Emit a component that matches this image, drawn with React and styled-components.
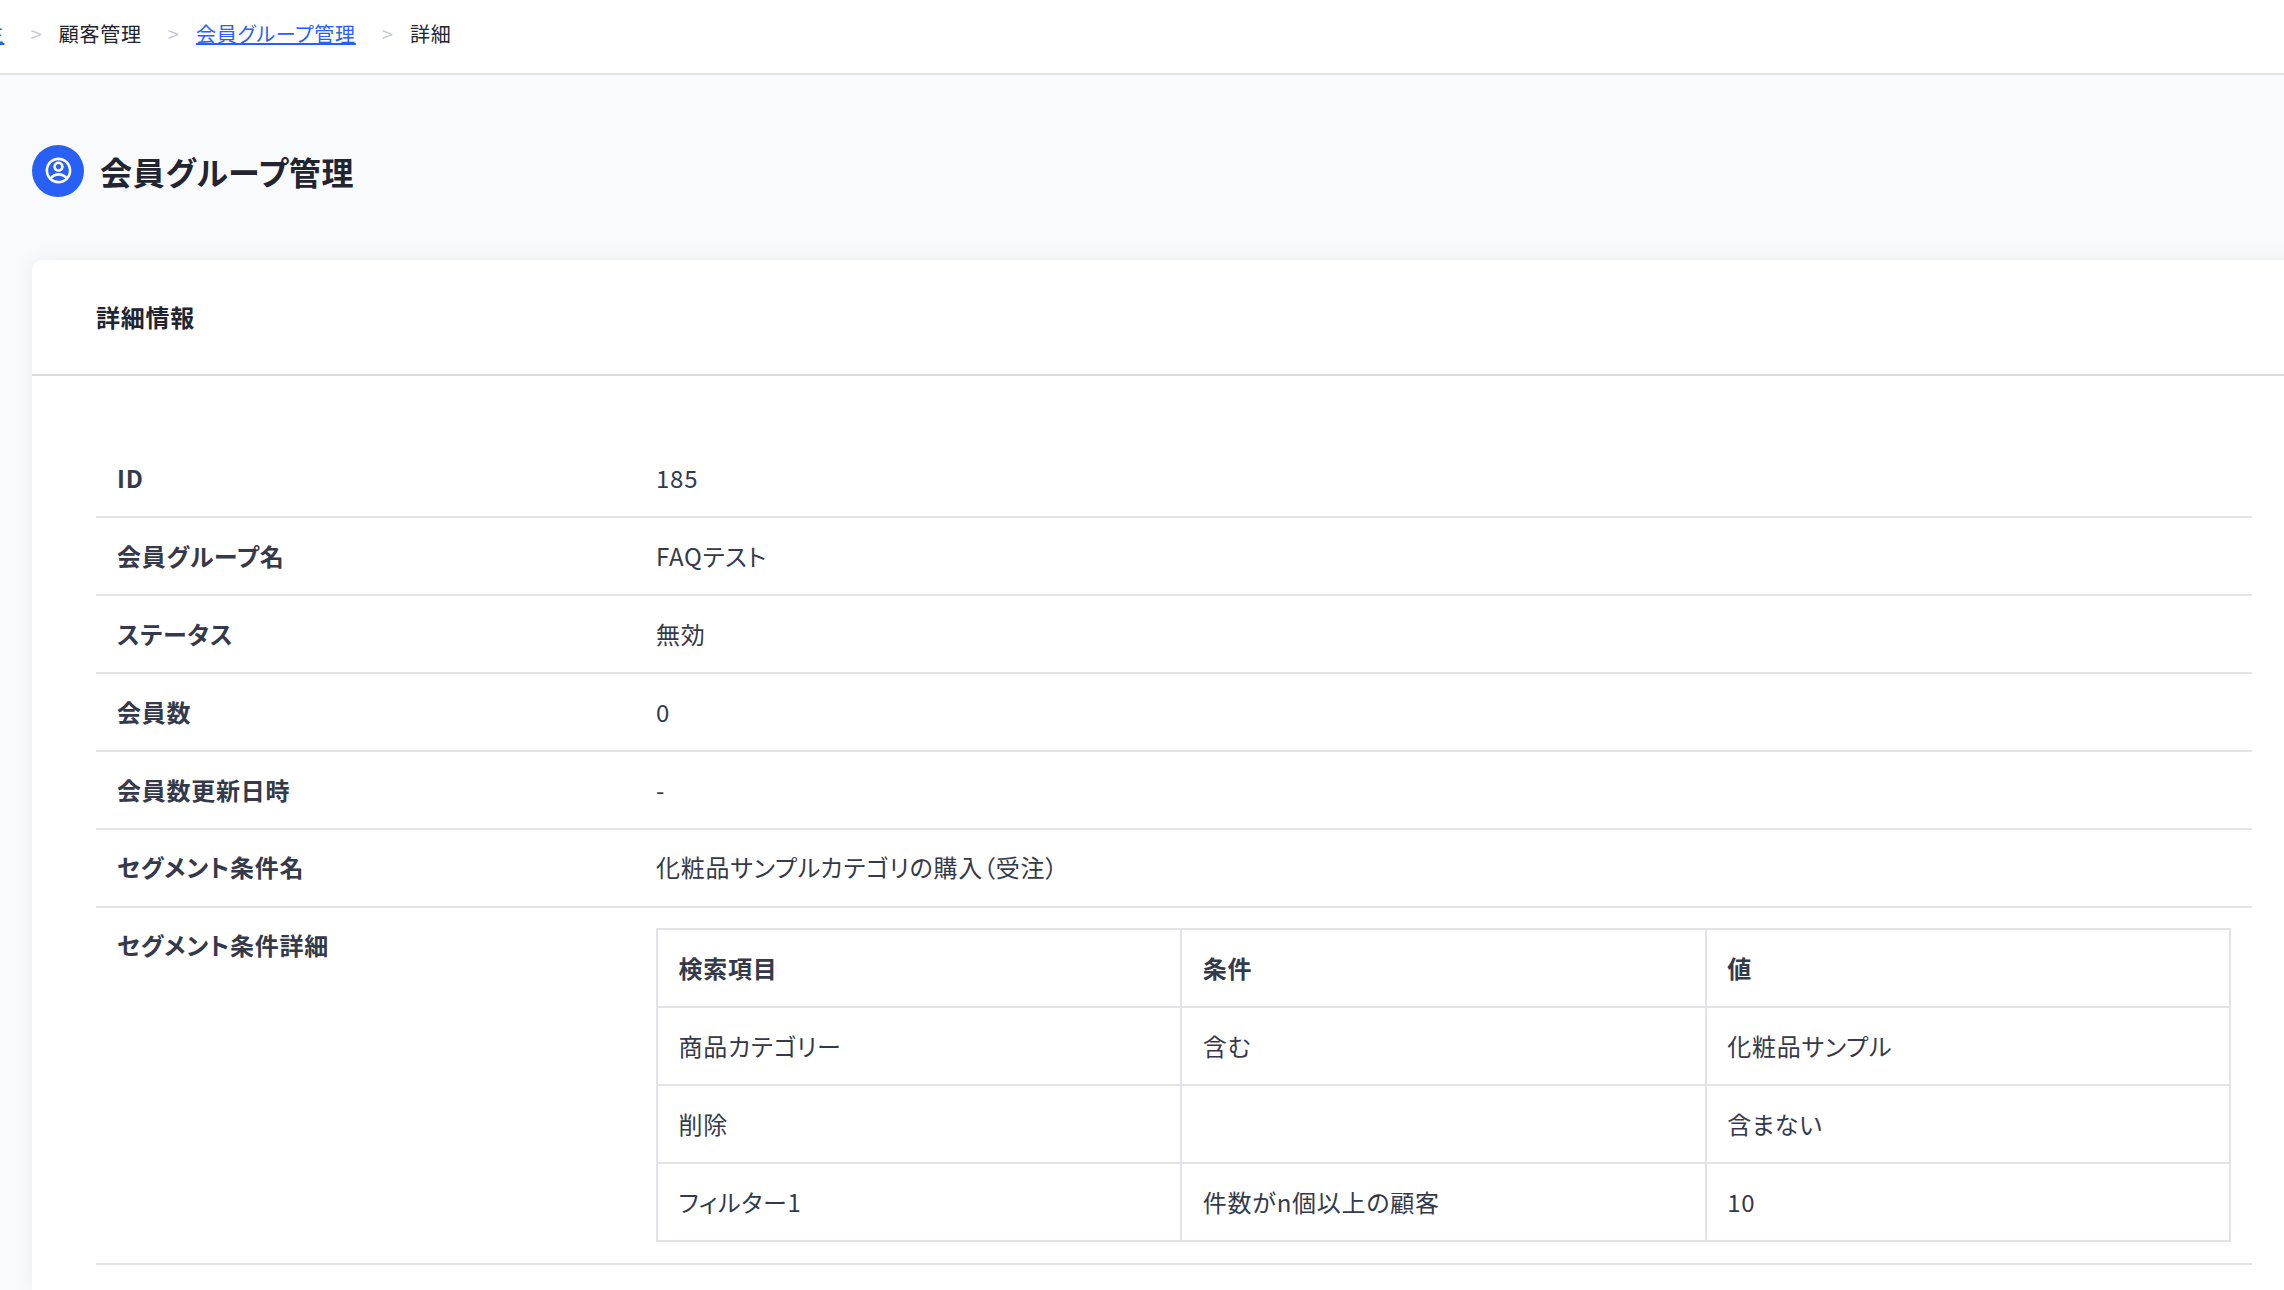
import { RiAccountCircleLine } from "react-icons/ri";
import styled, { createGlobalStyle } from "styled-components";

const GlobalStyle = createGlobalStyle`
  * {
    box-sizing: border-box;
  }

  html,
  body {
    margin: 0;
    height: 100%;
    overflow: hidden;
  }

  body {
    background: #f8fafc;
    color: #353a4a;
    font-family: "Noto Sans CJK JP", "Noto Sans", sans-serif;
    font-size: 24px;
    line-height: 36px;
    letter-spacing: 0.032em;
    font-feature-settings: "palt";
  }
`;

const Breadcrumb = styled.nav`
  height: 75px;
  padding-bottom: 5px;
  display: flex;
  align-items: center;
  background: #ffffff;
  border-bottom: 2px solid #e2e2ea;
  color: #222530;
  font-size: 20px;
  white-space: nowrap;
`;

const BreadcrumbItem = styled.span`
  margin-left: ${(props) => (props.$first ? "-80px" : "0")};
  width: ${(props) => (props.$first ? "84.5px" : "auto")};
  text-align: right;
`;

const BreadcrumbLink = styled.a`
  color: #2860f6;
  text-decoration: underline;
`;

const Separator = styled.span`
  width: 54.2px;
  padding-left: 26px;
  color: #c6c8da;
`;

const PageHead = styled.header`
  height: 185px;
  padding: 70px 32px 0;
  display: flex;
  gap: 16px;
`;

const IconCircle = styled.span`
  width: 52px;
  height: 52px;
  padding-bottom: 1px;
  display: flex;
  align-items: center;
  justify-content: center;
  border-radius: 50%;
  background: #2860f6;
  color: #ffffff;
`;

const PageTitle = styled.h1`
  margin: 0;
  color: #222530;
  font-size: 32px;
  line-height: 52px;
  font-weight: 700;
`;

const Card = styled.section`
  width: 2284px;
  height: 1030px;
  margin-left: 32px;
  background: #ffffff;
  border-radius: 10px 0 0 0;
  box-shadow: 0 0 20px rgba(0, 0, 0, 0.06);
`;

const CardHeader = styled.div`
  height: 116px;
  padding: 0 64px;
  display: flex;
  align-items: center;
  border-bottom: 2px solid #dddddd;
`;

const CardTitle = styled.h2`
  margin: 0;
  color: #222530;
  font-size: 24px;
  font-weight: 700;
`;

const DetailList = styled.dl`
  width: 2156px;
  margin: 64px 64px 0;
`;

const DetailLabel = styled.dt`
  padding: 20px 21px;
  font-weight: 700;
`;

const DetailValue = styled.dd`
  margin: 0;
  padding: 20px 21px;
`;

const DetailRow = styled.div`
  display: grid;
  grid-template-columns: 25% 75%;
  border-bottom: 2px solid #e2e2ea;

  &:nth-child(n + 6) ${DetailLabel}, &:nth-child(6) ${DetailValue} {
    padding-top: 19px;
    padding-bottom: 21px;
  }
`;

const ConditionTable = styled.table`
  width: 1575px;
  margin-bottom: 1px;
  border-collapse: collapse;
  table-layout: fixed;
`;

const ConditionCell = styled.td`
  height: 78px;
  padding: 0 20.5px;
  border: 2px solid #e2e2ea;
  text-align: left;
  font-weight: ${(props) => (props.as === "th" ? 700 : 400)};
`;

const details = [
  ["ID", "185"],
  ["会員グループ名", "FAQテスト"],
  ["ステータス", "無効"],
  ["会員数", "0"],
  ["会員数更新日時", "-"],
  ["セグメント条件名", "化粧品サンプルカテゴリの購入（受注）"],
];

const columns = ["検索項目", "条件", "値"];

const conditions = [
  ["商品カテゴリー", "含む", "化粧品サンプル"],
  ["削除", "", "含まない"],
  ["フィルター1", "件数がn個以上の顧客", "10"],
];

const App = () => {
  return (
    <>
      <GlobalStyle />
      <Breadcrumb>
        <BreadcrumbItem $first>
          <BreadcrumbLink>管理者主</BreadcrumbLink>
        </BreadcrumbItem>
        <Separator>&gt;</Separator>
        <BreadcrumbItem>顧客管理</BreadcrumbItem>
        <Separator>&gt;</Separator>
        <BreadcrumbItem>
          <BreadcrumbLink>会員グループ管理</BreadcrumbLink>
        </BreadcrumbItem>
        <Separator>&gt;</Separator>
        <BreadcrumbItem>詳細</BreadcrumbItem>
      </Breadcrumb>
      <main>
        <PageHead>
          <IconCircle>
            <RiAccountCircleLine size={31} />
          </IconCircle>
          <PageTitle>会員グループ管理</PageTitle>
        </PageHead>
        <Card>
          <CardHeader>
            <CardTitle>詳細情報</CardTitle>
          </CardHeader>
          <DetailList>
            {details.map(([label, value]) => (
              <DetailRow key={label}>
                <DetailLabel>{label}</DetailLabel>
                <DetailValue>{value}</DetailValue>
              </DetailRow>
            ))}
            <DetailRow>
              <DetailLabel>セグメント条件詳細</DetailLabel>
              <DetailValue>
                <ConditionTable>
                  <thead>
                    <tr>
                      {columns.map((column) => (
                        <ConditionCell as="th" key={column}>
                          {column}
                        </ConditionCell>
                      ))}
                    </tr>
                  </thead>
                  <tbody>
                    {conditions.map((row) => (
                      <tr key={row[0]}>
                        {row.map((cell, index) => (
                          <ConditionCell key={index}>{cell}</ConditionCell>
                        ))}
                      </tr>
                    ))}
                  </tbody>
                </ConditionTable>
              </DetailValue>
            </DetailRow>
          </DetailList>
        </Card>
      </main>
    </>
  );
};

export default App;
